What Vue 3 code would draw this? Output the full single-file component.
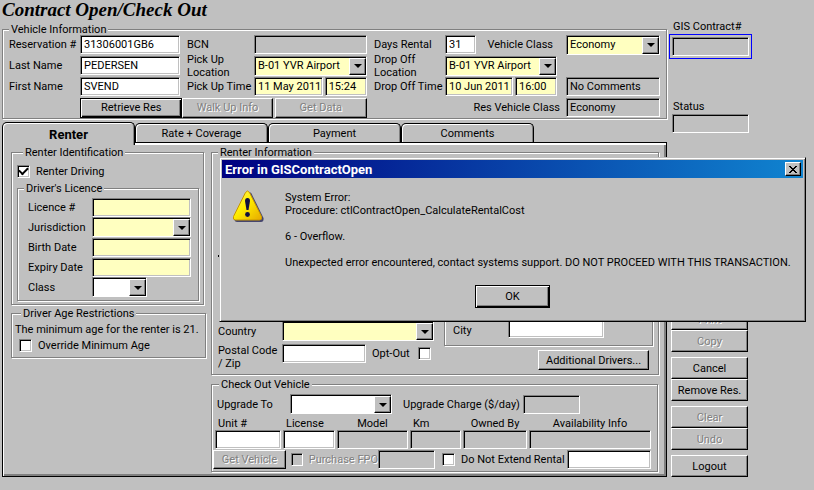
<script setup>
import { ref } from 'vue'

const tabs = ['Renter', 'Rate + Coverage', 'Payment', 'Comments']
const activeTab = ref('Renter')
const renterDriving = ref(true)
const licenceRows = [
  { id: 'licence', label: 'Licence #', type: 'text' },
  { id: 'jurisdiction', label: 'Jurisdiction', type: 'select' },
  { id: 'birth', label: 'Birth Date', type: 'text' },
  { id: 'expiry', label: 'Expiry Date', type: 'text' },
  { id: 'class', label: 'Class', type: 'select', plain: true }
]
const vehicleFields = [
  { id: 'unit', label: 'Unit #', align: 'left' },
  { id: 'plate', label: 'License', align: 'left' },
  { id: 'model', label: 'Model', align: 'center', locked: true },
  { id: 'km', label: 'Km', align: 'left', locked: true },
  { id: 'owned', label: 'Owned By', align: 'center', locked: true },
  { id: 'avail', label: 'Availability Info', align: 'center', locked: true }
]
const actionGroups = [
  [{ label: 'Print', off: true }, { label: 'Copy', off: true }],
  [{ label: 'Cancel' }, { label: 'Remove Res.' }],
  [{ label: 'Clear', off: true }, { label: 'Undo', off: true }],
  [{ label: 'Logout' }]
]
</script>

<template>
  <div class="app">
    <h1>Contract Open/Check Out</h1>
    <div class="columns">
      <main>
        <fieldset>
          <legend>Vehicle Information</legend>
          <div class="vehicle">
            <label for="res">Reservation #</label>
            <input id="res" class="field" value="31306001GB6">
            <label for="bcn" class="mid">BCN</label>
            <input id="bcn" class="field locked" readonly>
            <label for="days" class="mid">Days Rental</label>
            <div class="pair spread">
              <input id="days" class="field days" value="31">
              <label for="vclass">Vehicle Class</label>
            </div>
            <div class="combo yellow last">
              <select id="vclass"><option>Economy</option></select><span class="arrow"></span>
            </div>

            <label for="lname">Last Name</label>
            <input id="lname" class="field" value="PEDERSEN">
            <label for="puloc" class="mid">Pick Up<br>Location</label>
            <div class="combo yellow">
              <select id="puloc"><option>B-01 YVR Airport</option></select><span class="arrow"></span>
            </div>
            <label for="doloc" class="mid">Drop Off<br>Location</label>
            <div class="combo yellow">
              <select id="doloc"><option>B-01 YVR Airport</option></select><span class="arrow"></span>
            </div>
            <span class="last"></span>

            <label for="fname">First Name</label>
            <input id="fname" class="field" value="SVEND">
            <label for="pudate" class="mid">Pick Up Time</label>
            <div class="pair">
              <input id="pudate" class="field yellow date" value="11 May 2011">
              <input class="field yellow time" aria-label="Pick up hour" value="15:24">
            </div>
            <label for="dodate" class="mid">Drop Off Time</label>
            <div class="pair">
              <input id="dodate" class="field yellow date" value="10 Jun 2011">
              <input class="field yellow time" aria-label="Drop off hour" value="16:00">
            </div>
            <input class="field locked last" aria-label="Comments" readonly value="No Comments">

            <div class="lookups">
              <button class="btn default">Retrieve Res</button>
              <button class="btn" disabled>Walk Up Info</button>
              <button class="btn gap" disabled>Get Data</button>
            </div>
            <label for="rclass" class="res-class">Res Vehicle Class</label>
            <input id="rclass" class="field locked last" readonly value="Economy">
          </div>
        </fieldset>

        <div class="tabs" role="tablist">
          <button v-for="t in tabs" :key="t" role="tab" class="tab" :class="{ active: t === activeTab }"
            :aria-selected="t === activeTab" @click="activeTab = t">{{ t }}</button>
        </div>

        <section class="panel">
          <div class="left-side">
            <fieldset class="ident">
              <legend>Renter Identification</legend>
              <label class="check driving"><input v-model="renterDriving" type="checkbox">Renter Driving</label>
              <fieldset>
                <legend>Driver's Licence</legend>
                <div class="licence">
                  <template v-for="r in licenceRows" :key="r.id">
                    <label :for="r.id">{{ r.label }}</label>
                    <input v-if="r.type === 'text'" :id="r.id" class="field yellow">
                    <div v-else class="combo" :class="r.plain ? 'short' : 'yellow'">
                      <select :id="r.id"><option></option></select><span class="arrow"></span>
                    </div>
                  </template>
                </div>
              </fieldset>
            </fieldset>
            <fieldset class="age">
              <legend>Driver Age Restrictions</legend>
              <p>The minimum age for the renter is 21.</p>
              <label class="check"><input type="checkbox">Override Minimum Age</label>
            </fieldset>
          </div>

          <div class="right-side">
            <fieldset>
              <legend>Renter Information</legend>
              <div class="renter">
                <div class="address">
                  <div class="tick"></div>
                  <div class="address-grid">
                    <label for="country">Country</label>
                    <div class="combo yellow">
                      <select id="country"><option></option></select><span class="arrow"></span>
                    </div>
                    <label for="postal">Postal Code<br>/ Zip</label>
                    <div class="postal">
                      <input id="postal" class="field">
                      <label class="check opt">Opt-Out<input type="checkbox"></label>
                    </div>
                  </div>
                </div>
                <div class="extra">
                  <div class="city">
                    <label for="city">City</label>
                    <input id="city" class="field">
                  </div>
                  <button class="btn drivers">Additional Drivers...</button>
                </div>
              </div>
            </fieldset>

            <fieldset class="checkout">
              <legend>Check Out Vehicle</legend>
              <div class="upgrade">
                <label for="upto">Upgrade To</label>
                <div class="combo">
                  <select id="upto"><option></option></select><span class="arrow"></span>
                </div>
                <label for="upcharge" class="charge">Upgrade Charge ($/day)</label>
                <input id="upcharge" class="field locked" readonly>
              </div>
              <div class="unit">
                <div v-for="f in vehicleFields" :key="f.id" class="unit-cell">
                  <label :for="f.id" :class="f.align">{{ f.label }}</label>
                  <input :id="f.id" class="field" :class="{ locked: f.locked }" :readonly="f.locked">
                </div>
              </div>
              <div class="vehicle-actions">
                <button class="btn" disabled>Get Vehicle</button>
                <label class="check off"><input type="checkbox" disabled>Purchase FPO</label>
                <input class="field locked fpo" aria-label="FPO amount" readonly>
                <label class="check"><input type="checkbox">Do Not Extend Rental</label>
                <input class="field" aria-label="Extension note">
              </div>
            </fieldset>
          </div>
        </section>
      </main>

      <aside>
        <label for="contract">GIS Contract#</label>
        <div class="focus"><input id="contract" class="field locked" readonly></div>
        <label for="status" class="status">Status</label>
        <input id="status" class="field locked status-field" readonly>
        <nav>
          <div v-for="(g, i) in actionGroups" :key="i" class="group">
            <button v-for="a in g" :key="a.label" class="btn" :disabled="a.off">{{ a.label }}</button>
          </div>
        </nav>
      </aside>
    </div>

    <div class="dialog" role="alertdialog" aria-labelledby="dlg-title">
      <div class="title">
        <span id="dlg-title">Error in GISContractOpen</span>
        <button class="close" aria-label="Close">
          <svg width="8" height="7" viewBox="0 0 8 7" shape-rendering="crispEdges">
            <path d="M0 0h2v1h1v1h2V1h1V0h2v1H7v1H6v1H5v1h1v1h1v1h1v1H6V6H5V5H3v1H2v1H0V6h1V5h1V4h1V3H2V2H1V1H0z" />
          </svg>
        </button>
      </div>
      <div class="message">
        <svg width="32" height="32" viewBox="0 0 32 32">
          <defs>
            <linearGradient id="warn" x1="0" y1="0" x2="1" y2="1">
              <stop offset="0" stop-color="#fff36a" />
              <stop offset="0.45" stop-color="#ffee00" />
              <stop offset="1" stop-color="#e6a800" />
            </linearGradient>
          </defs>
          <path d="M14.5 3 Q17 0.5 19.5 3.5 L31.5 28 Q32 32 29 32 H5 Q2 31.500 3 29z" fill="#46466e" />
          <path d="M13.500 2.500 Q15.500 -0.500 17.500 2.500 L29.500 26.500 Q30.500 30 27.500 30 H3.500 Q0.500 30 1.500 26.500z" fill="url(#warn)" stroke="#c89600" stroke-width="1" />
          <path d="M13 11 Q13 8 15.500 8 Q18 8 18 11 L16.500 20 H14.500z" fill="#101040" />
          <circle cx="15.500" cy="24.500" r="2.400" fill="#101040" />
        </svg>
        <p>System Error:<br>Procedure: ctlContractOpen_CalculateRentalCost<br><br>6 - Overflow.<br><br>Unexpected error encountered, contact systems support. DO NOT PROCEED WITH THIS TRANSACTION.</p>
      </div>
      <button class="btn default ok">OK</button>
    </div>
  </div>
</template>

<style>
body { background: #c0c0c0; }
</style>

<style scoped>
* { box-sizing: border-box; }
.app {
  position: relative;
  padding: 0 0 13px 2px;
  font: 11px/13px Roboto, "Liberation Sans", sans-serif;
  color: #000;
}
input, select, button { font: inherit; color: inherit; border-radius: 0; margin: 0; min-width: 0; }
p { margin: 0; }
label { white-space: nowrap; }
h1 {
  margin: 0;
  height: 20px;
  font: italic bold 19px/20px "Liberation Serif", "Times New Roman", serif;
}
.columns { display: grid; grid-template-columns: minmax(0, 1fr) 145px; column-gap: 2px; }
main { padding-top: 4px; }

fieldset {
  margin: 0;
  padding: 0;
  min-width: 0;
  border: 1px solid #808080;
  box-shadow: 1px 1px 0 #fff, inset 1px 1px 0 #fff;
}
legend { margin-left: 6px; padding: 1px 2px 0; line-height: 9px; background: #c0c0c0; }

.field {
  width: 100%;
  height: 19px;
  padding: 0 0 0 3px;
  border: 1px solid;
  border-color: #808080 #fff #fff #808080;
  background: #fff;
  box-shadow: inset 1px 1px 0 #000, inset -1px -1px 0 #c0c0c0;
  outline: none;
}
.field.locked { background: #c0c0c0; }
.field.yellow { background: #ffffc0; }

.combo {
  display: grid;
  height: 20px;
  border: 1px solid;
  border-color: #808080 #fff #fff #808080;
  background: #fff;
  box-shadow: inset 1px 1px 0 #000;
}
.combo.yellow { background: #ffffc0; }
.combo select {
  grid-area: 1 / 1;
  width: 100%;
  height: 18px;
  padding: 0 18px 0 3px;
  border: 0;
  appearance: none;
  background: transparent;
  outline: none;
}
.arrow {
  grid-area: 1 / 1;
  justify-self: end;
  display: grid;
  place-items: center;
  width: 17px;
  height: 17px;
  margin-top: 1px;
  border: 1px solid;
  border-color: #fff #000 #000 #fff;
  background: #c0c0c0;
  box-shadow: inset -1px -1px 0 #808080;
  pointer-events: none;
}
.arrow::before {
  content: "";
  border: 4px solid transparent;
  border-top-color: #000;
  border-bottom-width: 0;
}

.btn {
  height: 20px;
  padding: 0;
  border: 1px solid;
  border-color: #fff #000 #000 #fff;
  background: #c0c0c0;
  box-shadow: inset -1px -1px 0 #808080;
  white-space: nowrap;
}
.btn:disabled, .off { color: #808080; text-shadow: 1px 1px 0 #fff; }
.btn.default {
  border-color: #000;
  box-shadow: inset 1px 1px 0 #fff, inset -1px -1px 0 #000, inset -2px -2px 0 #808080;
}

.check { display: flex; align-items: center; gap: 6px; }
.check input {
  appearance: none;
  display: grid;
  place-items: center;
  width: 13px;
  height: 13px;
  border: 1px solid;
  border-color: #808080 #fff #fff #808080;
  background: #fff;
  box-shadow: inset 1px 1px 0 #000, inset -1px -1px 0 #c0c0c0;
}
.check input:disabled { background: #c0c0c0; }
.check input:checked::after {
  content: "";
  width: 7px;
  height: 4px;
  border: 2px solid #000;
  border-width: 0 0 2px 2px;
  transform: rotate(-45deg);
  margin-bottom: 2px;
}

.vehicle {
  display: grid;
  grid-template-columns: 71px 100fr 74px 113fr 78px 112fr 103fr;
  grid-auto-rows: 21px;
  align-items: center;
  padding: 0 6px 0 6px;
}
.vehicle > .mid { padding-left: 7px; }
.vehicle > .last { width: auto; margin-left: 9px; }
.pair { display: flex; gap: 2px; align-items: center; }
.spread { justify-content: space-between; padding-right: 4px; }
.days { width: 31px; }
.date { flex: 70; }
.time { flex: 41; }
.lookups { grid-column: 2 / 5; display: grid; grid-template-columns: 102fr 90fr 94fr; }
.lookups .gap { margin-left: 2px; }
.res-class { grid-column: 5 / 7; text-align: right; margin-right: -3px; }

.tabs { display: flex; height: 20px; margin-top: 3px; align-items: flex-end; }
.tab {
  width: 133px;
  height: 19px;
  padding: 0;
  border: 1px solid #000;
  border-bottom: 0;
  border-radius: 5px 5px 0 0;
  background: #c0c0c0;
  box-shadow: inset 1px 1px 0 #fff, inset -1px 0 0 #808080;
}
.tab.active { position: relative; height: 23px; margin-bottom: -3px; font-weight: bold; font-size: 13px; }

.panel {
  display: grid;
  grid-template-columns: 195px minmax(0, 1fr);
  column-gap: 5px;
  padding: 4px 7px 4px 8px;
  border: 1px solid #000;
  box-shadow: inset 1px 2px 0 #fff, inset -2px -2px 0 #808080;
}
.ident { margin-right: 2px; padding: 0 4px 3px 5px; }
.driving { height: 26px; padding-top: 2px; }
.licence {
  display: grid;
  grid-template-columns: 64px 1fr;
  grid-auto-rows: 20px;
  align-items: center;
  padding: 4px 7px 3px 10px;
}
.short { width: 55px; }
.age { margin-top: 3px; padding: 0 6px 5px 3px; }
.age p { margin-top: 5px; margin-bottom: 3px; white-space: nowrap; }
.age .check { padding-left: 4px; }

.renter {
  display: grid;
  grid-template-columns: 216fr 209fr;
  column-gap: 10px;
  align-items: end;
  min-height: 217px;
  padding: 0 5px 4px 6px;
}
.tick { width: 1px; height: 2px; margin-bottom: 64px; background: #000; }
.address-grid { display: grid; grid-template-columns: 64px 1fr; row-gap: 3px; align-items: center; }
.postal { display: flex; gap: 6px; align-items: center; align-self: start; }
.postal .field { width: 84px; }
.opt { gap: 8px; }
.extra { display: flex; flex-direction: column; gap: 4px; }
.city {
  display: flex;
  align-items: flex-end;
  height: 46px;
  padding: 0 48px 7px 8px;
  border: 1px solid #808080;
  box-shadow: 1px 1px 0 #fff, inset 1px 1px 0 #fff;
}
.city label { width: 55px; line-height: 14px; }
.city .field { flex: 1; }
.drivers { width: 111px; align-self: flex-end; margin-right: 4px; }

.checkout { margin: 4px 1px 0 0; padding: 0 6px 2px 1px; }
.upgrade {
  display: grid;
  grid-template-columns: 73px 102px 131px 57px;
  align-items: center;
  padding: 5px 0 3px 4px;
}
.charge { padding-left: 11px; }
.unit { display: grid; grid-template-columns: 66fr 52fr 71fr 51fr 64fr 122fr; gap: 2px; padding-left: 2px; }
.unit-cell { display: grid; }
.unit-cell label { padding: 0 3px; }
.center { text-align: center; }
.vehicle-actions {
  display: grid;
  grid-template-columns: 78px 87px 64px 125px 1fr;
  align-items: center;
  margin-top: 1px;
}
.vehicle-actions .btn { width: 73px; height: 19px; }
.vehicle-actions .fpo { width: 57px; }

aside { display: flex; flex-direction: column; align-items: flex-start; }
aside > label { padding-left: 4px; line-height: 14px; }
.focus { width: 83px; padding: 2px; border: 1px solid #0000ff; }
.status { margin-top: 41px; }
.status-field { width: 77px; margin-left: 3px; }
nav { display: grid; gap: 5px; width: 77px; margin: auto 0 0 2px; }
.group { display: grid; }
.group .btn { height: 22px; }

.dialog {
  position: absolute;
  top: 157px;
  left: 219px;
  right: 8px;
  padding: 2px 2px 13px;
  border: 1px solid;
  border-color: #c0c0c0 #000 #000 #c0c0c0;
  background: #c0c0c0;
  box-shadow: inset 1px 1px 0 #fff, inset -1px -1px 0 #808080;
}
.title {
  display: flex;
  align-items: center;
  justify-content: space-between;
  height: 18px;
  padding: 0 2px 0 3px;
  background: linear-gradient(90deg, #000080, #1084d0);
  color: #fff;
  font-weight: bold;
  font-size: 13px;
}
.close {
  display: grid;
  place-items: center;
  width: 16px;
  height: 14px;
  padding: 0;
  border: 1px solid;
  border-color: #fff #000 #000 #fff;
  background: #c0c0c0;
  box-shadow: inset -1px -1px 0 #808080;
}
.message { display: flex; gap: 21px; padding: 12px 8px 0 10px; }
.message svg { flex: none; }
.message p { padding-top: 1px; white-space: nowrap; }
.ok { display: block; width: 75px; height: 23px; margin: 16px auto 0; }
</style>
